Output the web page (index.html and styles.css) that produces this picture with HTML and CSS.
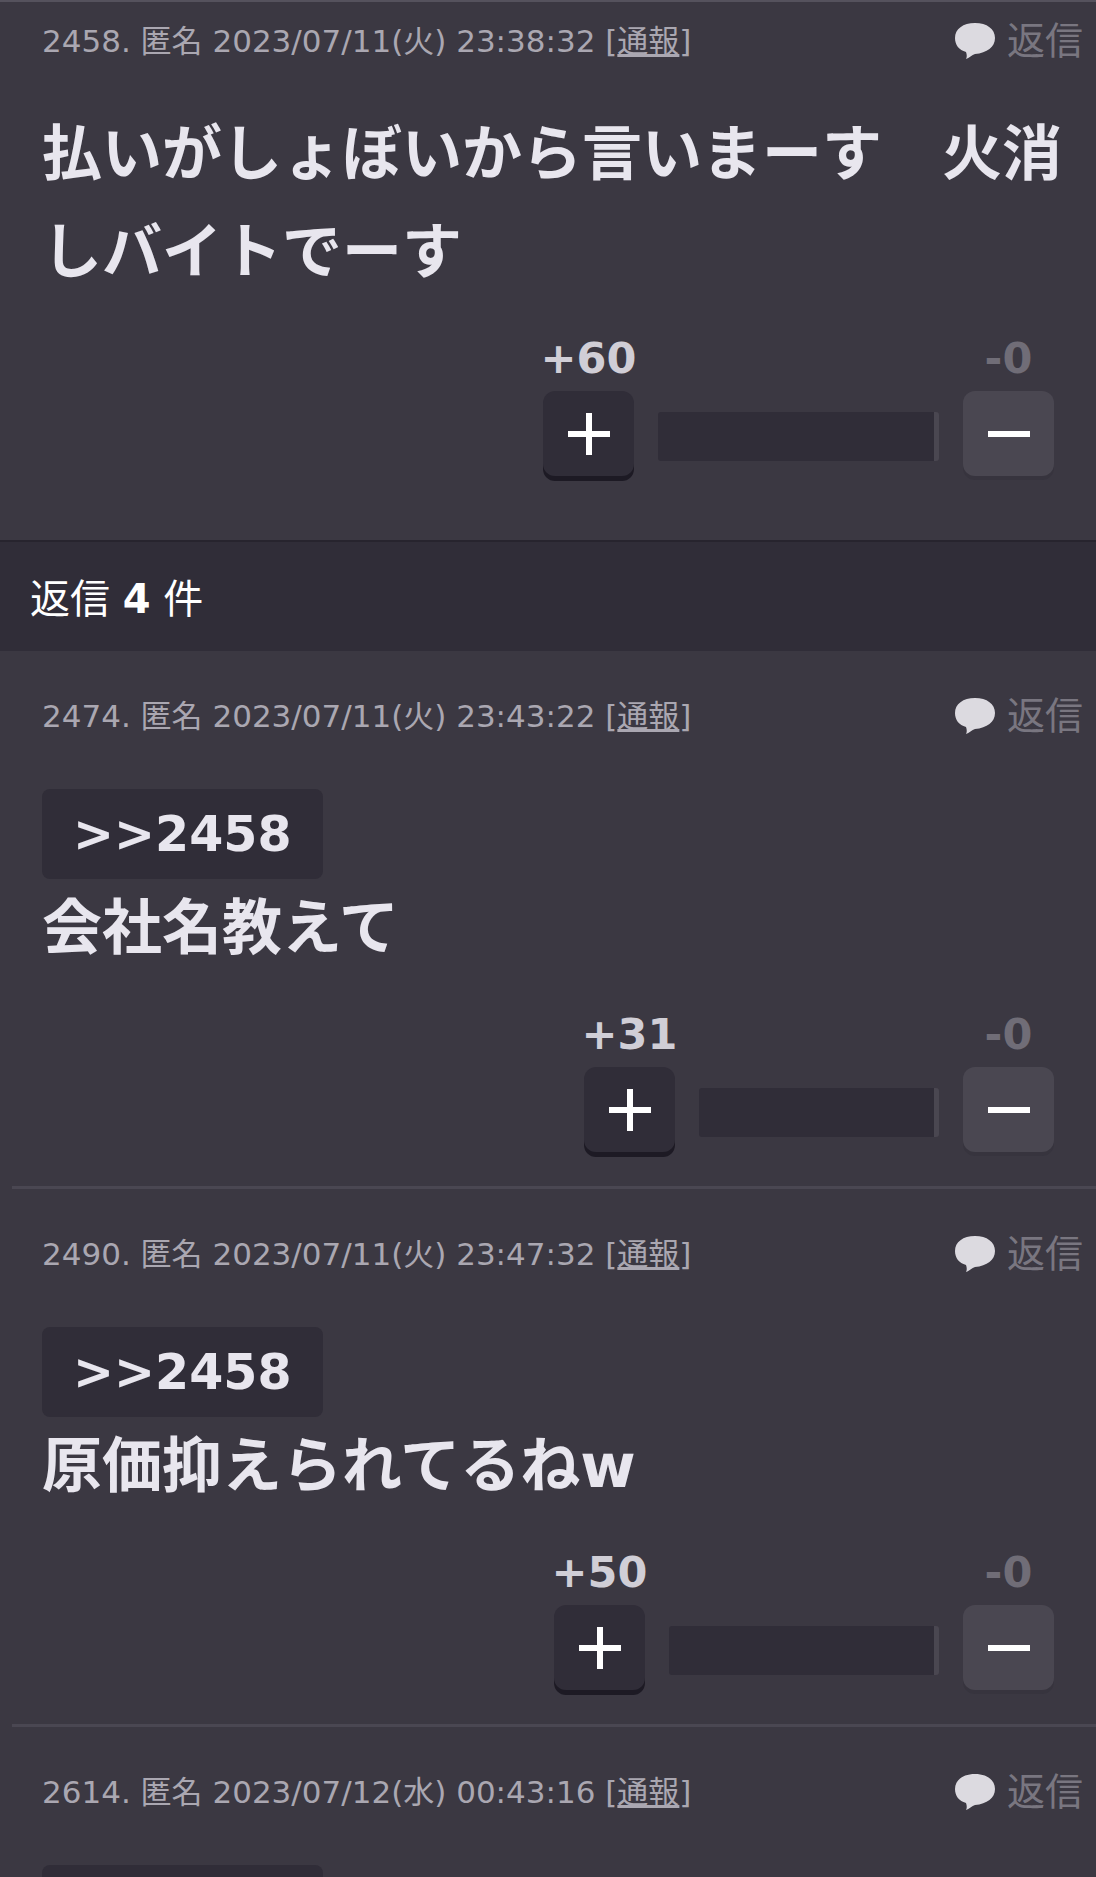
FILE: index.html
```html
<!DOCTYPE html>
<html lang="ja">

<head>
  <meta charset="UTF-8">
  <meta name="viewport" content="width=device-width, initial-scale=1.0">
  <title>返信 4 件</title>
  <link rel="stylesheet" href="styles.css">
</head>

<body>
  <!-- balloon icon shared by every reply link -->
  <svg class="sprite" aria-hidden="true">
    <symbol id="balloon" viewBox="0 0 40 36">
      <path d="M20 0C8 0 0 6 0 15c0 7 4 12 11 14 1 3 1 5 0 7 3-1 6-4 9-5 12-1 20-7 20-16S32 0 20 0z" />
    </symbol>
  </svg>

  <article class="comment parent">
    <div class="head">
      <p class="info">2458. 匿名 2023/07/11(火) 23:38:32 [<a href="#">通報</a>]</p>
      <a href="#" class="reply"><svg><use href="#balloon" /></svg>返信</a>
    </div>
    <p class="body">払いがしょぼいから言いまーす　火消しバイトでーす</p>
    <div class="rate">
      <div class="vote plus">
        <span>+60</span>
        <button type="button" aria-label="プラス"></button>
      </div>
      <div class="bar" style="width: 281px"></div>
      <div class="vote minus">
        <span>-0</span>
        <button type="button" aria-label="マイナス"></button>
      </div>
    </div>
  </article>

  <h2 class="count">返信 <b>4</b> 件</h2>

  <article class="comment">
    <div class="head">
      <p class="info">2474. 匿名 2023/07/11(火) 23:43:22 [<a href="#">通報</a>]</p>
      <a href="#" class="reply"><svg><use href="#balloon" /></svg>返信</a>
    </div>
    <a href="#" class="anchor">&gt;&gt;2458</a>
    <p class="body">会社名教えて</p>
    <div class="rate">
      <div class="vote plus">
        <span>+31</span>
        <button type="button" aria-label="プラス"></button>
      </div>
      <div class="bar" style="width: 240px"></div>
      <div class="vote minus">
        <span>-0</span>
        <button type="button" aria-label="マイナス"></button>
      </div>
    </div>
  </article>

  <article class="comment">
    <div class="head">
      <p class="info">2490. 匿名 2023/07/11(火) 23:47:32 [<a href="#">通報</a>]</p>
      <a href="#" class="reply"><svg><use href="#balloon" /></svg>返信</a>
    </div>
    <a href="#" class="anchor">&gt;&gt;2458</a>
    <p class="body">原価抑えられてるねw</p>
    <div class="rate">
      <div class="vote plus">
        <span>+50</span>
        <button type="button" aria-label="プラス"></button>
      </div>
      <div class="bar" style="width: 270px"></div>
      <div class="vote minus">
        <span>-0</span>
        <button type="button" aria-label="マイナス"></button>
      </div>
    </div>
  </article>

  <article class="comment last">
    <div class="head">
      <p class="info">2614. 匿名 2023/07/12(水) 00:43:16 [<a href="#">通報</a>]</p>
      <a href="#" class="reply"><svg><use href="#balloon" /></svg>返信</a>
    </div>
    <a href="#" class="anchor">&gt;&gt;2458</a>
  </article>
</body>

</html>
```
FILE: styles.css
```css
* {
  box-sizing: border-box;
  padding: 0;
  margin: 0;
}

html {
  height: 100%;
  overflow: hidden;
}

body {
  height: 100%;
  overflow-x: hidden;
  overflow-y: auto;
  scrollbar-width: none;
  background: #3b3842;
  color: #e8e6ee;
  font-family: "DejaVu Sans", "Noto Sans CJK JP", sans-serif;
}

.sprite {
  display: none;
}

.comment {
  margin-left: 12px;
  padding: 40px 13px 34px 30px;
  border-bottom: 3px solid #4a4752;
}

.parent {
  margin-left: 0;
  padding: 14px 13px 64px 42px;
  border-top: 2px solid #55525d;
  border-bottom: 0;
}

.last {
  border-bottom: 0;
}

.head {
  display: flex;
  justify-content: space-between;
  margin-bottom: 39px;
  line-height: 50px;
}

.info {
  font-size: 31px;
  color: #aaa7b1;
}

.info a {
  color: inherit;
}

.reply {
  display: flex;
  align-items: center;
  gap: 12px;
  font-size: 38px;
  color: #797680;
  text-decoration: none;
}

.reply svg {
  width: 40px;
  height: 36px;
  fill: #dcdae0;
}

.anchor {
  display: block;
  width: fit-content;
  margin-top: 48px;
  padding: 2px 31px 0;
  border-radius: 8px;
  background: #302d38;
  color: #e8e6ee;
  font-size: 49px;
  font-weight: bold;
  line-height: 88px;
  text-decoration: none;
}

.body {
  font-size: 60px;
  font-weight: bold;
  line-height: 98px;
}

.rate {
  display: flex;
  justify-content: flex-end;
  align-items: flex-end;
  gap: 24px;
  padding: 30px 29px 0 0;
}

.vote {
  display: flex;
  flex-direction: column;
  align-items: center;
  gap: 6px;
  width: 91px;
  color: #d0ced6;
  font-size: 43px;
  font-weight: bold;
  line-height: 54px;
}

.vote button {
  display: grid;
  place-items: center;
  width: 100%;
  height: 85px;
  border: 0;
  border-radius: 12px;
  background: #302d38;
  box-shadow: 0 5px 0 #1d1a24;
}

/* plus and minus signs, both bars sit in one grid cell */
.vote button::before,
.plus button::after {
  content: "";
  grid-area: 1 / 1;
  width: 42px;
  height: 6px;
  background: #fff;
}

.plus button::after {
  width: 6px;
  height: 42px;
}

.minus {
  color: #706d77;
}

.minus button {
  background: #4a4751;
  box-shadow: 0 4px 0 #37343e;
}

.bar {
  height: 49px;
  margin-bottom: 15px;
  border-right: 5px solid #4a4751;
  border-radius: 3px;
  background: #302d38;
}

.count {
  padding: 6px 30px 0;
  border-top: 2px solid #27242e;
  background: #302d38;
  color: #fff;
  font-size: 40px;
  font-weight: normal;
  line-height: 103px;
}
```
